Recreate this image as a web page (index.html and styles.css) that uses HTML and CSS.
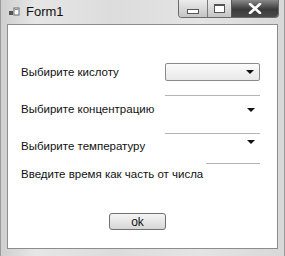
FILE: index.html
```html
<!DOCTYPE html>
<html>
<head>
    <title>Form1</title>
    <link rel="stylesheet" href="styles.css">
</head>
<body>
    <div class="window">
        <div class="titlebar">
            <svg class="app-icon" width="11" height="10" viewBox="0 0 11 10">
                <rect x="0" y="4" width="4" height="4" fill="#555"/>
                <rect x="5" y="1" width="5" height="7" fill="#fff" stroke="#666" stroke-width="1"/>
                <rect x="6" y="2" width="3" height="1" fill="#888"/>
            </svg>
            <span class="title">Form1</span>
            <div class="caption-buttons">
                <div class="cap-btn cap-min"><span class="min-bar"></span></div>
                <div class="cap-btn cap-max"><span class="max-box"></span></div>
                <div class="cap-btn cap-close">
                    <svg width="14" height="11" viewBox="0 0 14 11">
                        <path d="M2 1 L12 10 M12 1 L2 10" stroke="#fff" stroke-width="2.6" stroke-linecap="round"/>
                    </svg>
                </div>
            </div>
        </div>

        <div class="client">
            <div class="row row-1">
                <span class="label">Выбирите кислоту</span>
                <div class="combo">
                    <span class="arrow"></span>
                </div>
            </div>
            <div class="row row-2">
                <span class="label">Выбирите концентрацию</span>
                <div class="combo combo-flat">
                    <span class="arrow"></span>
                </div>
            </div>
            <div class="row row-3">
                <span class="label">Выбирите температуру</span>
                <div class="combo combo-flat">
                    <span class="arrow"></span>
                </div>
            </div>
            <div class="row row-4">
                <span class="label">Введите время как часть от числа</span>
                <div class="textbox"></div>
            </div>
            <div class="actions">
                <button class="ok-btn">ok</button>
            </div>
        </div>
    </div>
</body>
</html>
```

FILE: styles.css
```css
body {
    margin: 0;
    padding: 0;
    font-family: "Liberation Sans", Arial, sans-serif;
    background-color: #fff;
}
.window {
    width: 285px;
    height: 256px;
    box-sizing: border-box;
    background: linear-gradient(90deg, #cfcfcf 0%, #e6e6e6 12%, #dcdcdc 40%, #e4e4e4 70%, #d8d8d8 100%);
    border-left: 1px solid #9a9a9a;
    border-right: 1px solid #9a9a9a;
    padding-bottom: 6px;
}
.titlebar {
    height: 24px;
    display: flex;
    align-items: flex-start;
    padding-left: 8px;
}
.app-icon {
    margin-top: 7px;
}
.title {
    margin-left: 6px;
    margin-top: 4px;
    font-size: 13px;
    color: #111;
}
.caption-buttons {
    margin-left: auto;
    margin-right: 5px;
    display: flex;
    height: 17px;
    border: 1px solid #6a6a6a;
    border-top: none;
    border-radius: 0 0 4px 4px;
    overflow: hidden;
}
.cap-btn {
    display: flex;
    align-items: center;
    justify-content: center;
}
.cap-min {
    width: 28px;
    background: linear-gradient(#ececec, #c4c4c4);
    border-right: 1px solid #7a7a7a;
}
.cap-max {
    width: 23px;
    background: linear-gradient(#ececec, #c4c4c4);
    border-right: 1px solid #555;
}
.cap-close {
    width: 46px;
    background: linear-gradient(#8a8a8a, #3a3a3a 55%, #4a4a4a);
}
.min-bar {
    width: 10px;
    height: 3px;
    margin-top: 6px;
    background: #fff;
    border: 1px solid #555;
}
.max-box {
    width: 9px;
    height: 6px;
    border: 1px solid #555;
    border-top-width: 2px;
    background: #fff;
}
.client {
    margin: 0 6px;
    height: 225px;
    box-sizing: border-box;
    background: #fff;
    border: 1px solid #8c8c8c;
    padding: 38px 17px 0 13px;
    font-size: 11.5px;
    color: #111;
}
.row {
    display: flex;
    justify-content: space-between;
}
.label {
    line-height: 14px;
    white-space: nowrap;
}
.row-1 {
    height: 18px;
    align-items: center;
}
.row-2 {
    height: 21px;
    margin-top: 14px;
    align-items: flex-end;
}
.row-3 {
    height: 20px;
    margin-top: 17px;
    align-items: flex-end;
}
.row-4 {
    height: 18px;
    margin-top: 10px;
    align-items: flex-end;
}
.combo {
    flex-shrink: 0;
    width: 95px;
    height: 18px;
    box-sizing: border-box;
    border: 1px solid #8a8a8a;
    border-radius: 2px;
    background: linear-gradient(#fafafa, #e8e8e8);
    display: flex;
    justify-content: flex-end;
    align-items: center;
    padding-right: 5px;
    align-self: flex-start;
}
.combo-flat {
    border: none;
    border-top: 1px solid #b4b4b4;
    border-radius: 0;
    background: none;
    height: 20px;
    align-items: flex-start;
}
.row-2 .combo-flat .arrow {
    margin-top: 12px;
}
.row-3 .combo-flat .arrow {
    margin-top: 6px;
}
.arrow {
    width: 0;
    height: 0;
    border-left: 4px solid transparent;
    border-right: 4px solid transparent;
    border-top: 4px solid #111;
}
.textbox {
    flex-shrink: 0;
    width: 54px;
    height: 18px;
    align-self: flex-start;
    border-top: 1px solid #b4b4b4;
}
.actions {
    margin-top: 32px;
    padding-left: 88px;
}
.ok-btn {
    width: 57px;
    height: 17px;
    padding: 0;
    border: 1px solid #707070;
    border-radius: 3px;
    background: linear-gradient(#f4f4f4 0%, #e6e6e6 50%, #d6d6d6 100%);
    font-family: "Liberation Sans", Arial, sans-serif;
    font-size: 12px;
    color: #111;
    line-height: 14px;
}
```
